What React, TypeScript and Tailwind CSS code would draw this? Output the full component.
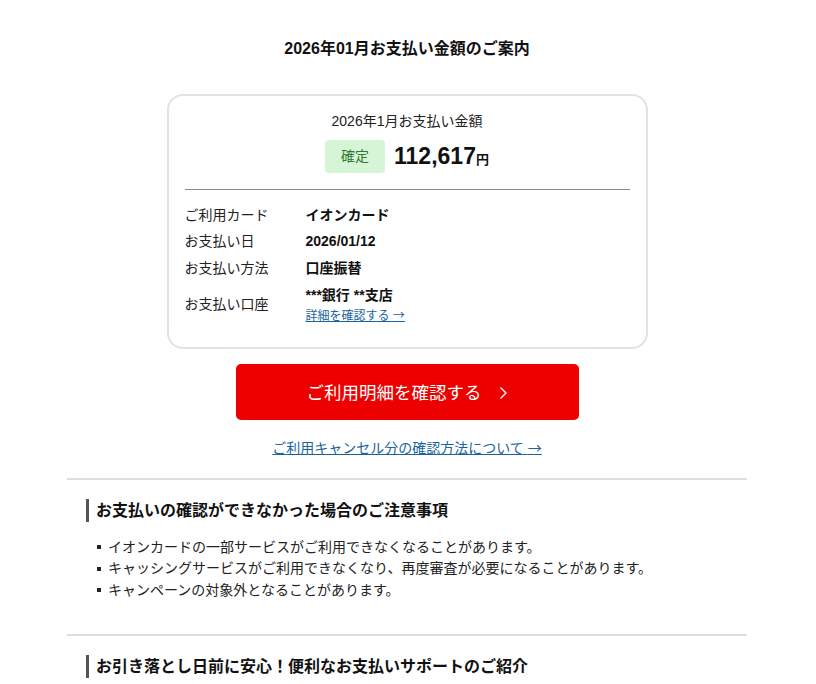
import React from "react";

const font = { fontFamily: '"Liberation Sans", "Noto Sans CJK JP", sans-serif' };
const cjk = { fontFamily: '"Noto Sans CJK JP", sans-serif' };

function Row({ label, children, className = "" }: { label: string; children: React.ReactNode; className?: string }) {
  return (
    <div className={`flex items-center ${className}`}>
      <div className="w-[121px] shrink-0 text-[14px] text-[#222]">{label}</div>
      <div className="text-[14px] font-bold text-[#111]">{children}</div>
    </div>
  );
}

function SectionHeading({ children }: { children: React.ReactNode }) {
  return (
    <div className="flex items-center pl-[19px]">
      <div className="w-[3px] h-[23px] bg-[#555]" />
      <h2 className="ml-[7px] text-[16px] font-bold leading-[23px] text-[#111]">{children}</h2>
    </div>
  );
}

export default function App() {
  const bullets = [
    "イオンカードの一部サービスがご利用できなくなることがあります。",
    "キャッシングサービスがご利用できなくなり、再度審査が必要になることがあります。",
    "キャンペーンの対象外となることがあります。",
  ];
  return (
    <div className="bg-white min-h-[684px] text-[#111]" style={font}>
      <div className="w-[680px] ml-[67px] pt-[37px]">
        <h1 className="text-center text-[16px] font-bold leading-[24px]">2026年01月お支払い金額のご案内</h1>

        <div className="mx-auto mt-[33px] w-[481px] border-2 border-[#e2e2e2] rounded-[16px] pt-[15px] pb-[22px] px-[14px]">
          <div className="text-center text-[14px] leading-[20px] text-[#222]">2026年1月お支払い金額</div>
          <div className="mt-[9px] flex items-center justify-center">
            <div className="w-[60px] h-[33px] rounded-[4px] bg-[#d6f5d6] text-[#2f7a33] text-[14px] flex items-center justify-center">確定</div>
            <div className="ml-[9px] flex items-baseline">
              <span className="text-[23px] font-bold leading-[33px]">112,617</span>
              <span className="text-[13px] font-bold">円</span>
            </div>
          </div>
          <div className="mt-[16px] mx-[2px] h-px bg-[#8c8c8c]" />
          <div className="mt-[12px] mx-[2px]">
            <Row label="ご利用カード" className="h-[26.5px]">イオンカード</Row>
            <Row label="お支払い日" className="h-[26.5px]">2026/01/12</Row>
            <Row label="お支払い方法" className="h-[26.5px]">口座振替</Row>
            <div className="flex items-center mt-[3px]">
              <div className="w-[121px] shrink-0 text-[14px] text-[#222]">お支払い口座</div>
              <div>
                <div className="text-[14px] font-bold leading-[20px]">***銀行 **支店</div>
                <a className="block mt-[1px] text-[12px] leading-[18px] text-[#1a63a0] underline">
                  詳細を確認する <span style={cjk}>→</span>
                </a>
              </div>
            </div>
          </div>
        </div>

        <div className="mx-auto mt-[15px] w-[343px] h-[56px] rounded-[5px] bg-[#ec0000] flex items-center justify-center text-white">
          <span className="text-[17.5px] leading-[24px] pt-[2px]">ご利用明細を確認する</span>
          <svg className="ml-[17px] mt-[2px]" width="9" height="14" viewBox="0 0 9 14" fill="none">
            <path d="M1.5 1.5 L7 7 L1.5 12.5" stroke="white" strokeWidth="1.4" />
          </svg>
        </div>

        <div className="mt-[16px] text-center">
          <a className="text-[14px] leading-[20px] text-[#1a63a0] underline">
            ご利用キャンセル分の確認方法について <span style={cjk}>→</span>
          </a>
        </div>

        <div className="mt-[18px] h-[2px] bg-[#dedede]" />

        <div className="mt-[19px]">
          <SectionHeading>お支払いの確認ができなかった場合のご注意事項</SectionHeading>
          <ul className="mt-[15px] pl-[30px]">
            {bullets.map((b) => (
              <li key={b} className="flex items-center h-[21.5px] text-[14px] text-[#222]">
                <span className="w-[4px] h-[4px] bg-[#222] mr-[7px] shrink-0" />
                {b}
              </li>
            ))}
          </ul>
        </div>

        <div className="mt-[33px] h-[2px] bg-[#dedede]" />

        <div className="mt-[19px]">
          <SectionHeading>お引き落とし日前に安心！便利なお支払いサポートのご紹介</SectionHeading>
        </div>
      </div>
    </div>
  );
}
